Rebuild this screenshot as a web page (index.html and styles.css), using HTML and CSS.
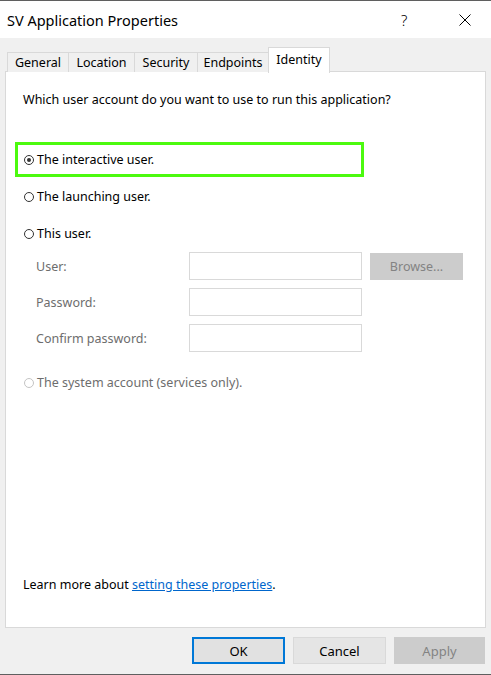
FILE: index.html
```html
<!DOCTYPE html>
<html>
<head>
<meta charset="utf-8">
<link rel="stylesheet" href="styles.css">
</head>
<body>
<div class="window">
  <div class="titlebar">
    <span class="title">SV Application Properties</span>
    <span class="help">?</span>
    <span class="close">
      <svg width="12" height="12" viewBox="0 0 12 12"><path d="M0.5 0.5 L11.5 11.5 M11.5 0.5 L0.5 11.5" stroke="#000" stroke-width="1" fill="none"/></svg>
    </span>
  </div>
  <div class="body">
    <div class="tabs">
      <div class="tab t-general">General</div>
      <div class="tab t-location">Location</div>
      <div class="tab t-security">Security</div>
      <div class="tab t-endpoints">Endpoints</div>
      <div class="tab active t-identity">Identity</div>
    </div>
    <div class="panel">
      <div class="question">Which user account do you want to use to run this application?</div>
      <div class="highlight">
        <span class="radio checked"></span><span class="rlabel">The interactive user.</span>
      </div>
      <div class="row r2"><span class="radio"></span><span class="rlabel">The launching user.</span></div>
      <div class="row r3"><span class="radio"></span><span class="rlabel">This user.</span></div>
      <div class="form">
        <span class="flabel">User:</span>
        <span class="input"></span>
        <span class="browse">Browse...</span>
        <span class="flabel">Password:</span>
        <span class="input"></span>
        <span></span>
        <span class="flabel">Confirm password:</span>
        <span class="input"></span>
        <span></span>
      </div>
      <div class="row r4 disabled"><span class="radio"></span><span class="rlabel">The system account (services only).</span></div>
      <div class="learn">Learn more about <a class="link">setting these properties</a>.</div>
    </div>
    <div class="buttons">
      <span class="btn default">OK</span>
      <span class="btn cancel">Cancel</span>
      <span class="btn apply">Apply</span>
    </div>
  </div>
</div>
</body>
</html>
```
FILE: styles.css
```css
html, body {
  margin: 0;
  padding: 0;
}
body {
  width: 491px;
  height: 675px;
  overflow: hidden;
  font-family: "Noto Sans", "Open Sans", sans-serif;
  font-size: 12px;
  color: #000;
}
.window {
  width: 491px;
  height: 675px;
  box-sizing: border-box;
  border-top: 1px solid #5f5f5f;
  border-bottom: 1px solid #5f5f5f;
  background: #f0f0f0;
  display: flex;
  flex-direction: column;
}
.titlebar {
  height: 37px;
  background: #fff;
  display: flex;
  align-items: center;
  padding-left: 7px;
  flex-shrink: 0;
}
.title {
  font-size: 14.5px;
  flex: 1;
}
.help {
  font-size: 15px;
  font-weight: 300;
  width: 12px;
  margin-right: 46px;
}
.close {
  width: 12px;
  height: 12px;
  margin-right: 20px;
  display: flex;
}
.body {
  flex: 1;
  display: flex;
  flex-direction: column;
  padding: 9px 5px 0 5px;
}
.tabs {
  display: flex;
  align-items: flex-end;
  height: 25px;
  padding-left: 2px;
  position: relative;
  z-index: 1;
}
.tab {
  height: 20px;
  box-sizing: border-box;
  border: 1px solid #d9d9d9;
  border-bottom: none;
  border-right: none;
  background: #f0f0f0;
  display: flex;
  align-items: center;
  justify-content: center;
  font-size: 12.5px;
  line-height: 1;
  padding-top: 1px;
}
.t-general { width: 61px; }
.t-location { width: 66px; }
.t-security { width: 63px; }
.t-endpoints { width: 71px; }
.t-identity { width: 62px; }
.tab.active {
  height: 26px;
  margin-bottom: -1px;
  background: #fff;
  border: 1px solid #d9d9d9;
  border-bottom: none;
  padding-bottom: 2px;
}
.panel {
  height: 557px;
  box-sizing: border-box;
  margin-top: -1px;
  background: #fff;
  border: 1px solid #d9d9d9;
  width: 481px;
  display: flex;
  flex-direction: column;
}
.question {
  margin-top: 20px;
  margin-left: 17px;
  height: 16px;
  line-height: 16px;
  font-size: 12.5px;
}
.highlight {
  margin-top: 34px;
  margin-left: 9px;
  width: 349px;
  height: 35px;
  box-sizing: border-box;
  border: 3px solid #4cfa0f;
  display: flex;
  align-items: center;
  padding-left: 6px;
}
.radio {
  width: 10px;
  height: 10px;
  box-sizing: border-box;
  border: 1px solid #333;
  border-radius: 50%;
  display: inline-flex;
  align-items: center;
  justify-content: center;
  flex-shrink: 0;
}
.radio.checked::after {
  content: "";
  width: 4px;
  height: 4px;
  border-radius: 50%;
  background: #333;
}
.rlabel {
  margin-left: 3px;
  font-size: 12.5px;
  line-height: 16px;
}
.row {
  display: flex;
  align-items: center;
  height: 16px;
  padding-left: 18px;
}
.r2 { margin-top: 12px; }
.r3 { margin-top: 21px; }
.r4 { margin-top: 23px; }
.disabled .radio { border-color: #c4c4c4; }
.disabled .rlabel { color: #6d6d6d; }
.form {
  margin-top: 10px;
  margin-left: 30px;
  display: grid;
  grid-template-columns: 145px 173px 93px;
  grid-auto-rows: 28px;
  row-gap: 8px;
  column-gap: 8px;
  align-items: center;
}
.flabel {
  color: #6d6d6d;
  font-size: 12.5px;
}
.input {
  height: 28px;
  box-sizing: border-box;
  border: 1px solid #d9d9d9;
  background: #fff;
}
.browse {
  height: 27px;
  background: #cccccc;
  color: #838383;
  font-size: 12.5px;
  display: flex;
  align-items: center;
  justify-content: center;
}
.learn {
  margin-top: auto;
  margin-bottom: 34px;
  margin-left: 17px;
  height: 16px;
  line-height: 16px;
  font-size: 12.5px;
}
.link {
  color: #0066cc;
  text-decoration: underline;
}
.buttons {
  margin-top: 9px;
  display: flex;
  justify-content: flex-end;
  gap: 8px;
  padding-right: 1px;
}
.btn {
  width: 93px;
  height: 27px;
  box-sizing: border-box;
  border: 1px solid #adadad;
  background: #e1e1e1;
  display: flex;
  align-items: center;
  justify-content: center;
  font-size: 13px;
}
.btn.default {
  border: 2px solid #0078d7;
}
.btn.cancel {
  border-color: #d9d9d9;
  background: #e5e5e5;
}
.btn.apply {
  width: 91px;
  background: #cccccc;
  border-color: #cccccc;
  color: #838383;
}
```
